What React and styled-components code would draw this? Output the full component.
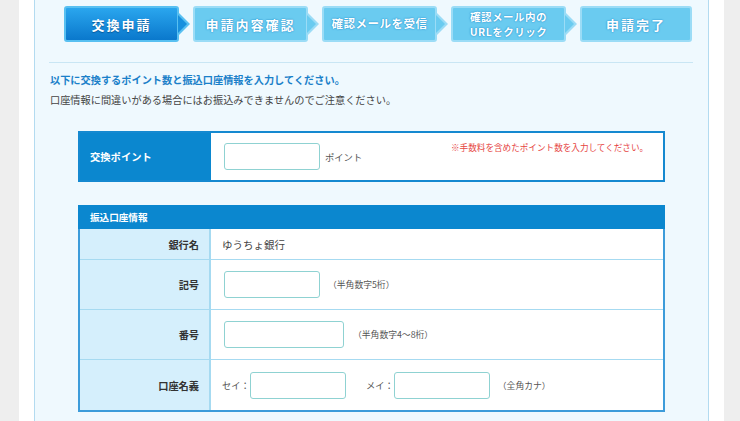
import React from 'react'
import styled, { createGlobalStyle } from 'styled-components'

const GlobalStyle = createGlobalStyle`
  html, body {
    margin: 0;
    padding: 0;
    background: #eeeeee;
    overflow: hidden;
    font-family: "Noto Sans CJK JP", "Noto Sans", sans-serif;
  }
`

const Page = styled.div`
  margin-left: 19px;
  width: 705px;
  background: #fff;
  padding: 0 15px;
  box-sizing: border-box;
  min-height: 421px;
`

const Panel = styled.div`
  width: 675px;
  box-sizing: border-box;
  min-height: 421px;
  background: #eff9fe;
  border-left: 1px solid #b3dbf0;
  border-right: 1px solid #b3dbf0;
  padding: 6px 15px 0 14px;
`

const Steps = styled.div`
  display: flex;
  gap: 14px;
  padding-left: 15px;
`

const sizes = {
  big: { font: '13px', line: '1', spacing: '2px' },
  mid: { font: '11.5px', line: '1', spacing: '0.5px' },
  small: { font: '10.5px', line: '15px', spacing: '0.5px' },
}

const Step = styled.div`
  position: relative;
  width: ${p => (p.$last ? 112 : 115)}px;
  height: 36px;
  box-sizing: border-box;
  border-radius: 3px;
  border: 2px solid ${p => (p.$active ? '#58c0f1' : '#9bdcf6')};
  background: ${p => (p.$active ? 'linear-gradient(#2aa6ee, #0a78cc)' : '#6acbf0')};
  display: flex;
  flex-direction: column;
  align-items: center;
  justify-content: center;
  color: #fff;
  font-weight: 700;
  font-size: ${p => sizes[p.$size || 'big'].font};
  line-height: ${p => sizes[p.$size || 'big'].line};
  letter-spacing: ${p => sizes[p.$size || 'big'].spacing};
  text-align: center;
  text-shadow: ${p => (p.$active ? '0 1px 1px #04589a' : '0 0 2px #2a94cf, 0 0 1px #2a94cf')};

  &::before {
    content: ${p => (p.$last ? 'none' : "''")};
    position: absolute;
    right: -13px;
    top: 50%;
    transform: translateY(-50%);
    border-left: 12px solid ${p => (p.$active ? '#58c0f1' : '#9bdcf6')};
    border-top: 12px solid transparent;
    border-bottom: 12px solid transparent;
  }
  &::after {
    content: ${p => (p.$last ? 'none' : "''")};
    position: absolute;
    right: -10px;
    top: 50%;
    transform: translateY(-50%);
    border-left: 9px solid ${p => (p.$active ? '#1790de' : '#6acbf0')};
    border-top: 9px solid transparent;
    border-bottom: 9px solid transparent;
  }
`

const StepLine = styled.span`
  display: block;
`

const Divider = styled.div`
  height: 1px;
  background: #c9e6f4;
  margin-top: 20px;
`

const Lead = styled.p`
  margin: 7px 0 0 1px;
  font-size: 10.2px;
  line-height: 20px;
  font-weight: 700;
  color: #1a80c9;
`

const Note = styled.p`
  margin: 0 0 0 1px;
  font-size: 10.2px;
  line-height: 20px;
  color: #444;
`

const PointTable = styled.div`
  margin: 21px 28px 0 29px;
  display: grid;
  grid-template-columns: 131px 1fr;
  border: 2px solid #1589d0;
  height: 51px;
  box-sizing: border-box;
  background: #fff;
`

const HeadCell = styled.div`
  background: #0b87cf;
  color: #fff;
  font-weight: 700;
  font-size: 10.3px;
  display: flex;
  align-items: center;
  padding-left: 10px;
`

const PointBody = styled.div`
  display: flex;
  align-items: center;
  padding-left: 13px;
  position: relative;
`

const Input = styled.div`
  width: ${p => p.$w || 96}px;
  height: 27px;
  box-sizing: border-box;
  border: 1px solid #8fd2d2;
  border-radius: 3px;
  background: #fff;
  flex-shrink: 0;
`

const Unit = styled.span`
  font-size: 9.3px;
  color: #555;
  margin-left: 5px;
`

const RedNote = styled.span`
  position: absolute;
  top: 8px;
  left: 240px;
  font-size: 8.6px;
  color: #e6453f;
  white-space: nowrap;
`

const BankTable = styled.div`
  margin: 23px 28px 0 29px;
  border: 2px solid #3d9cda;
  border-top: none;
  background: #fff;
`

const BankHead = styled.div`
  height: 24px;
  margin: 0 -2px;
  background: #0b87cf;
  color: #fff;
  font-weight: 700;
  font-size: 9.6px;
  display: flex;
  align-items: center;
  padding-left: 12px;
`

const Row = styled.div`
  display: grid;
  grid-template-columns: 131px 1fr;
  box-sizing: border-box;
  height: ${p => p.$h}px;
  border-bottom: ${p => (p.$last ? 'none' : '1px solid #a6daf1')};
`

const Label = styled.div`
  background: #d5effc;
  border-right: 2px solid #a6daf1;
  display: flex;
  align-items: center;
  justify-content: flex-end;
  padding-right: 10px;
  font-size: 10.2px;
  font-weight: 700;
  color: #333;
`

const Value = styled.div`
  display: flex;
  align-items: center;
  padding-left: 11px;
  font-size: 10.5px;
  color: #444;
`

const FieldWrap = styled.div`
  display: flex;
  align-items: center;
  padding-left: 2px;
`

const Hint = styled.span`
  font-size: 8.8px;
  color: #555;
  margin-left: ${p => p.$ml}px;
`

const NameLabel = styled.span`
  font-size: 9.3px;
  color: #555;
  margin: 0 0 0 ${p => p.$ml || 0}px;
`

export default function App() {
  return (
    <>
      <GlobalStyle />
      <Page>
        <Panel>
          <Steps>
            <Step $active>交換申請</Step>
            <Step>申請内容確認</Step>
            <Step $size="mid">確認メールを受信</Step>
            <Step $size="small">
              <StepLine>確認メール内の</StepLine>
              <StepLine>URLをクリック</StepLine>
            </Step>
            <Step $last>申請完了</Step>
          </Steps>
          <Divider />
          <Lead>以下に交換するポイント数と振込口座情報を入力してください。</Lead>
          <Note>口座情報に間違いがある場合にはお振込みできませんのでご注意ください。</Note>

          <PointTable>
            <HeadCell>交換ポイント</HeadCell>
            <PointBody>
              <Input />
              <Unit>ポイント</Unit>
              <RedNote>※手数料を含めたポイント数を入力してください。</RedNote>
            </PointBody>
          </PointTable>

          <BankTable>
            <BankHead>振込口座情報</BankHead>
            <Row $h={31}>
              <Label>銀行名</Label>
              <Value>ゆうちょ銀行</Value>
            </Row>
            <Row $h={50}>
              <Label>記号</Label>
              <Value>
                <FieldWrap>
                  <Input />
                  <Hint $ml={8}>（半角数字5桁）</Hint>
                </FieldWrap>
              </Value>
            </Row>
            <Row $h={50}>
              <Label>番号</Label>
              <Value>
                <FieldWrap>
                  <Input $w={120} />
                  <Hint $ml={9}>（半角数字4～8桁）</Hint>
                </FieldWrap>
              </Value>
            </Row>
            <Row $h={50} $last>
              <Label>口座名義</Label>
              <Value>
                <NameLabel>セイ：</NameLabel>
                <Input />
                <NameLabel $ml={20}>メイ：</NameLabel>
                <Input />
                <Hint $ml={8}>（全角カナ）</Hint>
              </Value>
            </Row>
          </BankTable>
        </Panel>
      </Page>
    </>
  )
}
